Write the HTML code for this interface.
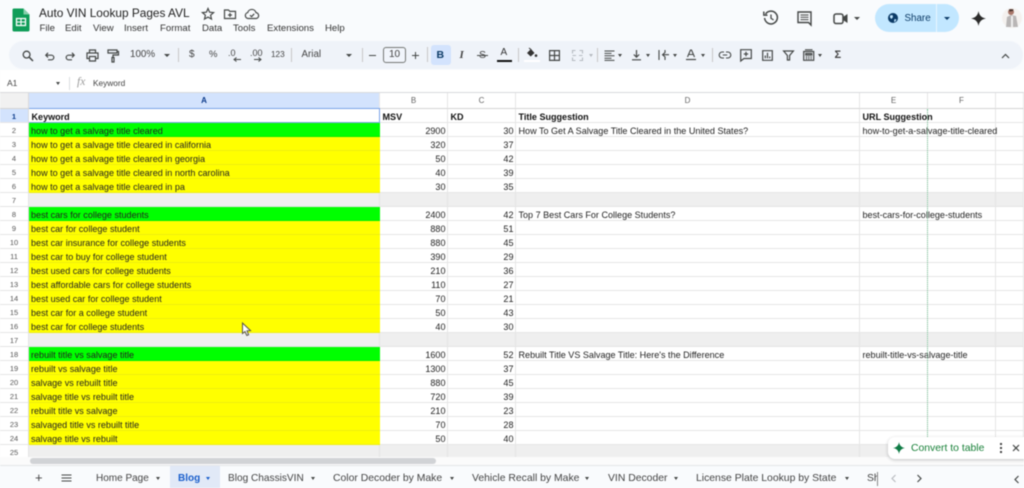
<!DOCTYPE html>
<html><head><meta charset="utf-8"><style>
*{box-sizing:border-box}
html,body{margin:0;padding:0;width:1024px;height:488px;overflow:hidden;background:#f9fbfd;font-family:"Liberation Sans",sans-serif;color:#1f1f1f}
.a{position:absolute;white-space:nowrap}
#root{position:relative;width:1024px;height:488px;overflow:hidden;filter:blur(.4px)}
table{position:absolute;left:0;top:93px;border-collapse:separate;border-spacing:0;table-layout:fixed;width:1024px;font-size:9.05px;background:#fff}
td{height:14px;padding:3px 2.5px 0;border-right:1px solid #e6e6e6;border-bottom:1px solid #e6e6e6;overflow:visible;white-space:nowrap;line-height:10px;color:#222;vertical-align:top}
td:first-child{text-align:center;font-size:7.5px;color:#555;background:#fff;border-right:1px solid #dadada;padding:3px 0 0}
tr.h td{height:16px;text-align:center;font-size:8px;color:#666;background:#fff;border-bottom:1px solid #d4d4d4}
tr.h td.s{background:#d3e3fd;color:#0b3a8a;font-weight:bold;border-bottom:1px solid #7aa3e8}
tr.h td.c{background:#f1f1f1}
tr.one td{font-weight:bold;color:#111}
tr.one td:first-child{background:#d3e3fd;color:#0b3a8a}
td.g{background:#00ff00;border-right:0;border-bottom-color:#00ee00;padding-left:2px}
td.y{background:#ffff00;border-right:0;border-bottom-color:#eeee10;padding-left:2px}
td.n{text-align:right;padding-right:1.5px}
tr.x td{background:#efefef;border-color:#e4e4e4}
tr.x td:first-child{background:#fff}
svg{position:absolute;overflow:visible}
.ic{fill:none;stroke:#444746;stroke-width:1.2}
</style></head><body><div id="root">

<!-- title bar -->
<svg style="left:12px;top:8px" width="18" height="24" viewBox="0 0 18 24"><path d="M2 0.5H11.5L17.5 6.5V22a1.5 1.5 0 0 1-1.5 1.5H2A1.5 1.5 0 0 1 .5 22V2A1.5 1.5 0 0 1 2 .5Z" fill="#0f9d58"/><path d="M11.5 .5V6.5H17.5Z" fill="#87ceac"/><rect x="4.5" y="10.5" width="9" height="7" fill="none" stroke="#fff" stroke-width="1.3"/><path d="M4.5 14H13.5M9 10.5V17.5" stroke="#fff" stroke-width="1.1"/></svg>
<div class="a" style="left:39px;top:4px;font-size:11.85px;line-height:18px;color:#1f1f1f">Auto VIN Lookup Pages AVL</div>
<svg style="left:201px;top:7px" width="14" height="14" viewBox="0 0 14 14"><path class="ic" d="M7 1.5L8.6 5.2 12.6 5.6 9.6 8.2 10.5 12.1 7 10.1 3.5 12.1 4.4 8.2 1.4 5.6 5.4 5.2Z"/></svg>
<svg style="left:223px;top:8px" width="14" height="12" viewBox="0 0 14 12"><path class="ic" d="M1.5 2H5.5L6.8 3.4H12.5V10.5H1.5Z"/><path class="ic" d="M7 5V9M5 7H9"/></svg>
<svg style="left:244px;top:8px" width="16" height="12" viewBox="0 0 16 12"><path class="ic" d="M4 10.5A3 3 0 0 1 3.7 4.6 4.3 4.3 0 0 1 12 4.6 3 3 0 0 1 12.3 10.5Z"/><path class="ic" d="M6 7.2L7.6 8.7 10.2 5.8"/></svg>
<div class="a" style="left:39.5px;top:22px;font-size:9.6px;line-height:13px;color:#333">File</div>
<div class="a" style="left:65px;top:22px;font-size:9.6px;line-height:13px;color:#333">Edit</div>
<div class="a" style="left:93px;top:22px;font-size:9.6px;line-height:13px;color:#333">View</div>
<div class="a" style="left:124px;top:22px;font-size:9.6px;line-height:13px;color:#333">Insert</div>
<div class="a" style="left:160px;top:22px;font-size:9.6px;line-height:13px;color:#333">Format</div>
<div class="a" style="left:202px;top:22px;font-size:9.6px;line-height:13px;color:#333">Data</div>
<div class="a" style="left:233px;top:22px;font-size:9.6px;line-height:13px;color:#333">Tools</div>
<div class="a" style="left:267px;top:22px;font-size:9.6px;line-height:13px;color:#333">Extensions</div>
<div class="a" style="left:325px;top:22px;font-size:9.6px;line-height:13px;color:#333">Help</div>

<!-- top right -->
<svg style="left:763px;top:10px" width="16" height="16" viewBox="0 0 16 16"><path fill="none" stroke="#444746" stroke-width="1.5" d="M2.5 4.2A6.4 6.4 0 1 1 1.6 8"/><path d="M.8 1.5V5.2H4.5" fill="none" stroke="#444746" stroke-width="1.4"/><path d="M8 4.5V8.3L10.6 10" fill="none" stroke="#444746" stroke-width="1.3"/></svg>
<svg style="left:797px;top:11px" width="15" height="15" viewBox="0 0 15 15"><path d="M1 1H14V14L11.5 11.5H1Z" fill="none" stroke="#444746" stroke-width="1.4"/><path d="M3.5 4H11.5M3.5 6.3H11.5M3.5 8.6H11.5" stroke="#444746" stroke-width="1"/></svg>
<svg style="left:833px;top:12px" width="15" height="13" viewBox="0 0 15 13"><rect x="1" y="2" width="9" height="9.5" rx="2" fill="none" stroke="#444746" stroke-width="1.5"/><path d="M10 5L14.5 2V11L10 8Z" fill="#444746"/></svg>
<div class="a" style="left:854px;top:17px;width:0;height:0;border:3px solid transparent;border-top:3.5px solid #444746;border-bottom:0"></div>
<div class="a" style="left:875px;top:4px;width:84px;height:28px;border-radius:14px;background:#c2e7ff"></div>
<div class="a" style="left:936px;top:4px;width:1px;height:28px;background:#eaf6ff"></div>
<svg style="left:887px;top:12px" width="12" height="12" viewBox="0 0 12 12"><circle cx="6" cy="6" r="5" fill="#0b3a66"/><path d="M3 3.5L5.5 3 6 5 4.5 7 3 5.5ZM7.5 7L9.5 7.5 8 10 7 9.5Z" fill="#c2e7ff"/></svg>
<div class="a" style="left:904.5px;top:10.5px;font-size:9.8px;line-height:15px;color:#0b3a66">Share</div>
<div class="a" style="left:944px;top:17px;width:0;height:0;border:3px solid transparent;border-top:3.5px solid #0b3a66;border-bottom:0"></div>
<svg style="left:971px;top:10.5px" width="15" height="15" viewBox="0 0 15 15"><path d="M7.5 0C8.3 4.5 10.5 6.7 15 7.5 10.5 8.3 8.3 10.5 7.5 15 6.7 10.5 4.5 8.3 0 7.5 4.5 6.7 6.7 4.5 7.5 0Z" fill="#2b2b2b"/></svg>
<svg style="left:1002px;top:7px" width="20" height="22" viewBox="0 0 20 22"><circle cx="10" cy="11" r="10" fill="#f4f1ef"/><circle cx="9" cy="5" r="3" fill="#a9776a"/><path d="M7 2.2L11.5 2.2 11 4 7.5 4.5Z" fill="#4b3630"/><path d="M4 20L5 10 9 8 14 9 16 20Z" fill="#b9b6b6"/><path d="M9 9L11 9 11 20 9 20Z" fill="#eee"/></svg>

<!-- toolbar -->
<div class="a" style="left:9px;top:41px;width:1014px;height:28px;border-radius:14px;background:#eff3f9"></div>
<svg style="left:22px;top:50px" width="12" height="12" viewBox="0 0 12 12"><circle cx="4.6" cy="4.6" r="3.4" fill="none" stroke="#444746" stroke-width="1.3"/><path d="M7.2 7.2L11 11" stroke="#444746" stroke-width="1.5"/></svg>
<svg style="left:45px;top:51px" width="10" height="10" viewBox="0 0 10 10"><path class="ic" d="M1 4.2H6.5A2.3 2.3 0 0 1 6.5 8.8H3M3 1.8L.8 4.2 3 6.4"/></svg>
<svg style="left:65px;top:51px" width="10" height="10" viewBox="0 0 10 10"><path class="ic" d="M9 4.2H3.5A2.3 2.3 0 0 0 3.5 8.8H7M7 1.8L9.2 4.2 7 6.4"/></svg>
<svg style="left:86px;top:49px" width="13" height="13" viewBox="0 0 13 13"><path class="ic" d="M3.5 4V1H9.5V4M3.5 9.5H1V4H12V9.5H9.5M3.5 7.5H9.5V12H3.5Z"/></svg>
<svg style="left:107px;top:49px" width="12" height="14" viewBox="0 0 12 14"><path class="ic" d="M1 1H10V4H1ZM10 2.5H11.5V6H6V8.5M5 8.5H7V13H5Z"/></svg>
<div class="a" style="left:130px;top:48px;font-size:9.8px;line-height:14px;color:#444">100%</div>
<div class="a" style="left:164px;top:54px;border:3px solid transparent;border-top:3.5px solid #444746;border-bottom:0"></div>
<div class="a" style="left:178px;top:48px;width:1px;height:14px;background:#c7c7c7"></div>
<div class="a" style="left:189px;top:48px;font-size:10px;line-height:14px;color:#444">$</div>
<div class="a" style="left:209px;top:48px;font-size:9.5px;line-height:14px;color:#444">%</div>
<div class="a" style="left:228px;top:47px;font-size:9px;line-height:12px;color:#444">.0</div>
<svg style="left:233px;top:57px" width="8" height="5" viewBox="0 0 8 5"><path d="M8 2.5H2M3.5 .5L1 2.5 3.5 4.5" fill="none" stroke="#444746"/></svg>
<div class="a" style="left:250px;top:47px;font-size:9px;line-height:12px;color:#444">.00</div>
<svg style="left:254px;top:57px" width="8" height="5" viewBox="0 0 8 5"><path d="M0 2.5H6M4.5 .5L7 2.5 4.5 4.5" fill="none" stroke="#444746"/></svg>
<div class="a" style="left:271px;top:49px;font-size:8.2px;line-height:12px;color:#444">123</div>
<div class="a" style="left:291px;top:48px;width:1px;height:14px;background:#c7c7c7"></div>
<div class="a" style="left:301.5px;top:48px;font-size:9.8px;line-height:14px;color:#444">Arial</div>
<div class="a" style="left:346px;top:54px;border:3px solid transparent;border-top:3.5px solid #444746;border-bottom:0"></div>
<div class="a" style="left:362px;top:48px;width:1px;height:14px;background:#c7c7c7"></div>
<div class="a" style="left:369px;top:54.5px;width:7px;height:1.2px;background:#444746"></div>
<div class="a" style="left:383px;top:47px;width:23px;height:16px;border:1px solid #747775;border-radius:3px;background:#f1f5fb;text-align:center;font-size:10px;line-height:14px;color:#444">10</div>
<div class="a" style="left:412px;top:54.5px;width:7px;height:1.2px;background:#444746"></div>
<div class="a" style="left:415px;top:51.5px;width:1.2px;height:7px;background:#444746"></div>
<div class="a" style="left:427px;top:47px;width:1px;height:15px;background:#c7c7c7"></div>
<div class="a" style="left:431px;top:45px;width:20px;height:20px;border-radius:3px;background:#d3e3fd"></div>
<div class="a" style="left:436.5px;top:48px;font-size:10.5px;line-height:14px;font-weight:bold;color:#0b3a66">B</div>
<div class="a" style="left:459.5px;top:48px;font-size:11px;line-height:14px;font-style:italic;font-family:'Liberation Serif',serif;font-weight:bold;color:#444">I</div>
<div class="a" style="left:479px;top:48px;font-size:10.5px;line-height:14px;color:#444">S</div>
<div class="a" style="left:477px;top:54.6px;width:11px;height:1px;background:#444746"></div>
<div class="a" style="left:500.5px;top:47px;font-size:10px;line-height:12px;color:#333">A</div>
<div class="a" style="left:496.5px;top:60px;width:15px;height:2px;background:#111"></div>
<div class="a" style="left:518px;top:48px;width:1px;height:14px;background:#c7c7c7"></div>
<svg style="left:525px;top:47px" width="13" height="12" viewBox="0 0 13 12"><path d="M2 6L6 2 9.5 6 5.7 9.5Z" fill="#333"/><path d="M4 1L6 2.5" stroke="#333"/><circle cx="11" cy="8.6" r="1.3" fill="#333"/></svg>
<div class="a" style="left:524px;top:60px;width:16px;height:2px;background:#fff"></div>
<svg style="left:549px;top:50px" width="11" height="11" viewBox="0 0 11 11"><path class="ic" d="M.6.6H10.4V10.4H.6ZM5.5.6V10.4M.6 5.5H10.4"/></svg>
<svg style="left:572px;top:50px" width="11" height="11" viewBox="0 0 11 11"><path d="M.5 3.5V.5H3.5M7.5.5H10.5V3.5M.5 7.5V10.5H3.5M7.5 10.5H10.5V7.5M.5 5.5H4M7 5.5H10.5" fill="none" stroke="#b5bac0" stroke-width="1.1"/></svg>
<div class="a" style="left:588.5px;top:54px;border:2.5px solid transparent;border-top:3px solid #b5bac0;border-bottom:0"></div>
<div class="a" style="left:597px;top:48px;width:1px;height:14px;background:#c7c7c7"></div>
<svg style="left:604px;top:50px" width="11" height="11" viewBox="0 0 11 11"><path d="M.5 1H10.5M.5 3.4H7.5M.5 5.8H10.5M.5 8.2H7.5M.5 10.4H10.5" stroke="#444746" stroke-width="1"/></svg>
<div class="a" style="left:618px;top:54px;border:2.8px solid transparent;border-top:3.2px solid #444746;border-bottom:0"></div>
<svg style="left:631px;top:49px" width="11" height="12" viewBox="0 0 11 12"><path d="M5.5 1V8M2.8 5.5L5.5 8.2 8.2 5.5M1 10.8H10" fill="none" stroke="#444746" stroke-width="1.2"/></svg>
<div class="a" style="left:646px;top:54px;border:2.8px solid transparent;border-top:3.2px solid #444746;border-bottom:0"></div>
<svg style="left:658px;top:49px" width="12" height="12" viewBox="0 0 12 12"><path d="M1 1V11M11 5.7H5M7.5 3L4.5 5.7 7.5 8.4M7 1V3M7 8.5V11" fill="none" stroke="#444746" stroke-width="1.1"/></svg>
<div class="a" style="left:673px;top:54px;border:2.8px solid transparent;border-top:3.2px solid #444746;border-bottom:0"></div>
<svg style="left:685px;top:49px" width="12" height="12" viewBox="0 0 12 12"><path d="M2.5 8L5.5 1H6.5L9.5 8M3.8 5.5H8.2" fill="none" stroke="#444746" stroke-width="1.1"/><path d="M1 10.5H11" stroke="#444746" stroke-width="1.2"/></svg>
<div class="a" style="left:701px;top:54px;border:2.8px solid transparent;border-top:3.2px solid #444746;border-bottom:0"></div>
<div class="a" style="left:712px;top:48px;width:1px;height:14px;background:#c7c7c7"></div>
<svg style="left:719px;top:51px" width="12" height="8" viewBox="0 0 12 8"><path d="M5 1H3.2A3 3 0 0 0 3.2 7H5M7 1H8.8A3 3 0 0 1 8.8 7H7M3.8 4H8.2" fill="none" stroke="#444746" stroke-width="1.1"/></svg>
<svg style="left:740px;top:49px" width="12" height="13" viewBox="0 0 12 13"><path class="ic" d="M.7.7H11.3V9.5H4L.7 12ZM6 2.8V7.3M3.8 5H8.2"/></svg>
<svg style="left:762px;top:50px" width="11" height="11" viewBox="0 0 11 11"><path class="ic" d="M.7.7H10.3V10.3H.7ZM3.3 8.2V5.5M5.5 8.2V2.8M7.7 8.2V6.5"/></svg>
<svg style="left:783px;top:50px" width="11" height="11" viewBox="0 0 11 11"><path class="ic" d="M.6 1H10.4L6.6 5.5V10H4.4V5.5Z"/></svg>
<svg style="left:803px;top:49px" width="12" height="12" viewBox="0 0 12 12"><path class="ic" d="M2 .8H9.5M.7 2.5V11.3H10.7V2.5ZM2.8 4.5H8.7V6H2.8ZM2.8 8H4.2M5.2 8H6.5M7.5 8H8.7M2.8 9.8H4.2M5.2 9.8H6.5M7.5 9.8H8.7"/></svg>
<div class="a" style="left:818px;top:54px;border:2.8px solid transparent;border-top:3.2px solid #444746;border-bottom:0"></div>
<div class="a" style="left:834.5px;top:48px;font-size:11px;line-height:14px;color:#444;font-weight:bold">Σ</div>
<svg style="left:1001px;top:53px" width="9" height="6" viewBox="0 0 9 6"><path d="M1 5L4.5 1.5 8 5" fill="none" stroke="#444746" stroke-width="1.2"/></svg>

<!-- formula bar -->
<div class="a" style="left:0;top:70px;width:1024px;height:23px;background:#fff"></div>
<div class="a" style="left:7px;top:77px;font-size:8.5px;line-height:12px;color:#444">A1</div>
<div class="a" style="left:56px;top:82px;border:2.5px solid transparent;border-top:3px solid #444746;border-bottom:0"></div>
<div class="a" style="left:69px;top:77px;width:1px;height:13px;background:#dadce0"></div>
<div class="a" style="left:77px;top:76px;font-size:11.5px;line-height:13px;font-family:'Liberation Serif',serif;font-style:italic;color:#999">fx</div>
<div class="a" style="left:93px;top:77px;font-size:8.3px;line-height:12px;color:#444">Keyword</div>
<div class="a" style="left:0;top:92px;width:1024px;height:1px;background:#d8dadc"></div>

<!-- grid -->
<table><colgroup><col style="width:29px"><col style="width:351px"><col style="width:68px"><col style="width:68px"><col style="width:344px"><col style="width:68px"><col style="width:68px"><col style="width:28px"></colgroup>
<tr class="h"><td class="c"></td><td class="s">A</td><td>B</td><td>C</td><td>D</td><td>E</td><td>F</td><td></td></tr>
<tr class="one"><td>1</td><td>Keyword</td><td>MSV</td><td>KD</td><td>Title Suggestion</td><td>URL Suggestion</td><td></td><td></td></tr>
<tr><td>2</td><td class="g">how to get a salvage title cleared</td><td class="n">2900</td><td class="n">30</td><td>How To Get A Salvage Title Cleared in the United States?</td><td>how-to-get-a-salvage-title-cleared</td><td></td><td></td></tr>
<tr><td>3</td><td class="y">how to get a salvage title cleared in california</td><td class="n">320</td><td class="n">37</td><td></td><td></td><td></td><td></td></tr>
<tr><td>4</td><td class="y">how to get a salvage title cleared in georgia</td><td class="n">50</td><td class="n">42</td><td></td><td></td><td></td><td></td></tr>
<tr><td>5</td><td class="y">how to get a salvage title cleared in north carolina</td><td class="n">40</td><td class="n">39</td><td></td><td></td><td></td><td></td></tr>
<tr><td>6</td><td class="y">how to get a salvage title cleared in pa</td><td class="n">30</td><td class="n">35</td><td></td><td></td><td></td><td></td></tr>
<tr class="x"><td>7</td><td></td><td></td><td></td><td></td><td></td><td></td><td></td></tr>
<tr><td>8</td><td class="g">best cars for college students</td><td class="n">2400</td><td class="n">42</td><td>Top 7 Best Cars For College Students?</td><td>best-cars-for-college-students</td><td></td><td></td></tr>
<tr><td>9</td><td class="y">best car for college student</td><td class="n">880</td><td class="n">51</td><td></td><td></td><td></td><td></td></tr>
<tr><td>10</td><td class="y">best car insurance for college students</td><td class="n">880</td><td class="n">45</td><td></td><td></td><td></td><td></td></tr>
<tr><td>11</td><td class="y">best car to buy for college student</td><td class="n">390</td><td class="n">29</td><td></td><td></td><td></td><td></td></tr>
<tr><td>12</td><td class="y">best used cars for college students</td><td class="n">210</td><td class="n">36</td><td></td><td></td><td></td><td></td></tr>
<tr><td>13</td><td class="y">best affordable cars for college students</td><td class="n">110</td><td class="n">27</td><td></td><td></td><td></td><td></td></tr>
<tr><td>14</td><td class="y">best used car for college student</td><td class="n">70</td><td class="n">21</td><td></td><td></td><td></td><td></td></tr>
<tr><td>15</td><td class="y">best car for a college student</td><td class="n">50</td><td class="n">43</td><td></td><td></td><td></td><td></td></tr>
<tr><td>16</td><td class="y">best car for college students</td><td class="n">40</td><td class="n">30</td><td></td><td></td><td></td><td></td></tr>
<tr class="x"><td>17</td><td></td><td></td><td></td><td></td><td></td><td></td><td></td></tr>
<tr><td>18</td><td class="g">rebuilt title vs salvage title</td><td class="n">1600</td><td class="n">52</td><td>Rebuilt Title VS Salvage Title: Here's the Difference</td><td>rebuilt-title-vs-salvage-title</td><td></td><td></td></tr>
<tr><td>19</td><td class="y">rebuilt vs salvage title</td><td class="n">1300</td><td class="n">37</td><td></td><td></td><td></td><td></td></tr>
<tr><td>20</td><td class="y">salvage vs rebuilt title</td><td class="n">880</td><td class="n">45</td><td></td><td></td><td></td><td></td></tr>
<tr><td>21</td><td class="y">salvage title vs rebuilt title</td><td class="n">720</td><td class="n">39</td><td></td><td></td><td></td><td></td></tr>
<tr><td>22</td><td class="y">rebuilt title vs salvage</td><td class="n">210</td><td class="n">23</td><td></td><td></td><td></td><td></td></tr>
<tr><td>23</td><td class="y">salvaged title vs rebuilt title</td><td class="n">70</td><td class="n">28</td><td></td><td></td><td></td><td></td></tr>
<tr><td>24</td><td class="y">salvage title vs rebuilt</td><td class="n">50</td><td class="n">40</td><td></td><td></td><td></td><td></td></tr>
<tr class="x"><td>25</td><td></td><td></td><td></td><td></td><td></td><td></td><td></td></tr>
</table>

<!-- selection A1 -->
<div class="a" style="left:29px;top:108px;width:351px;height:15px;border:1px solid #7aa3e8;border-left:0"></div>
<!-- green dashed line -->
<div class="a" style="left:927px;top:109px;width:0;height:348px;border-left:1px dotted #7cc99b"></div>

<!-- cursor -->
<svg style="left:241px;top:322px" width="12" height="15" viewBox="0 0 12 15"><path d="M1.5 1V11.5L4 9.5 5.8 13.5 7.6 12.7 6 8.8 9.5 8.6Z" fill="#fff" stroke="#55524a" stroke-width="1"/></svg>

<!-- scroll bar -->
<div class="a" style="left:0;top:457px;width:1024px;height:9px;background:#fbfbfb"></div>
<div class="a" style="left:30px;top:458px;width:406px;height:6px;border-radius:3px;background:#d1d3d6"></div>

<!-- tabs -->
<div class="a" style="left:0;top:465px;width:1024px;height:23px;background:#f9fbfd;border-top:1px solid #e4e6e8"></div>
<div class="a" style="left:170px;top:466px;width:50px;height:22px;background:#e1e9f7"></div>
<div class="a" style="left:35px;top:471px;font-size:13px;line-height:14px;color:#444">+</div>
<svg style="left:61px;top:474px" width="11" height="8" viewBox="0 0 11 8"><path d="M.5 1H10.5M.5 4H10.5M.5 7H10.5" stroke="#444746" stroke-width="1.1"/></svg>
<div class="a" style="left:96px;top:471.5px;font-size:10px;line-height:14px;color:#444">Home Page</div>
<div class="a" style="left:156px;top:477px;border:2.6px solid transparent;border-top:3px solid #444746;border-bottom:0"></div>
<div class="a" style="left:178px;top:471.5px;font-size:10px;line-height:14px;color:#1a5fcc;font-weight:bold">Blog</div>
<div class="a" style="left:206px;top:477px;border:2.6px solid transparent;border-top:3px solid #1a5fcc;border-bottom:0"></div>
<div class="a" style="left:228px;top:471.5px;font-size:10.1px;line-height:14px;color:#444">Blog ChassisVIN</div>
<div class="a" style="left:311px;top:477px;border:2.6px solid transparent;border-top:3px solid #444746;border-bottom:0"></div>
<div class="a" style="left:333px;top:471.5px;font-size:10.4px;line-height:14px;color:#444">Color Decoder by Make</div>
<div class="a" style="left:450px;top:477px;border:2.6px solid transparent;border-top:3px solid #444746;border-bottom:0"></div>
<div class="a" style="left:472px;top:471.5px;font-size:10.4px;line-height:14px;color:#444">Vehicle Recall by Make</div>
<div class="a" style="left:585px;top:477px;border:2.6px solid transparent;border-top:3px solid #444746;border-bottom:0"></div>
<div class="a" style="left:608px;top:471.5px;font-size:10.4px;line-height:14px;color:#444">VIN Decoder</div>
<div class="a" style="left:674px;top:477px;border:2.6px solid transparent;border-top:3px solid #444746;border-bottom:0"></div>
<div class="a" style="left:696px;top:471.5px;font-size:10.4px;line-height:14px;color:#444">License Plate Lookup by State</div>
<div class="a" style="left:845px;top:477px;border:2.6px solid transparent;border-top:3px solid #444746;border-bottom:0"></div>
<div class="a" style="left:867px;top:471.5px;width:11px;overflow:hidden;font-size:10.4px;line-height:14px;color:#444;border-right:1px solid #888">Sheet</div>
<svg style="left:890px;top:474px" width="7" height="9" viewBox="0 0 7 9"><path d="M5.5 1L2 4.5 5.5 8" fill="none" stroke="#b9bcc0" stroke-width="1.2"/></svg>
<svg style="left:916px;top:474px" width="7" height="9" viewBox="0 0 7 9"><path d="M1.5 1L5 4.5 1.5 8" fill="none" stroke="#444746" stroke-width="1.2"/></svg>
<svg style="left:1013px;top:475px" width="7" height="9" viewBox="0 0 7 9"><path d="M5.5 1L2 4.5 5.5 8" fill="none" stroke="#444746" stroke-width="1.2"/></svg>

<!-- convert to table -->
<div class="a" style="left:888px;top:437px;width:140px;height:22px;border-radius:7px 0 0 7px;background:#fff;box-shadow:0 1px 3px rgba(60,64,67,.3)"></div>
<svg style="left:893px;top:442px" width="12" height="12" viewBox="0 0 12 12"><path d="M6 0C6.5 3.5 8.5 5.5 12 6 8.5 6.5 6.5 8.5 6 12 5.5 8.5 3.5 6.5 0 6 3.5 5.5 5.5 3.5 6 0Z" fill="#0f7b45"/></svg>
<div class="a" style="left:911px;top:441.5px;font-size:10.4px;line-height:14px;color:#188038">Convert to table</div>
<div class="a" style="left:999.5px;top:443px;width:2px;height:2px;background:#444;box-shadow:0 4px 0 #444,0 8px 0 #444"></div>
<svg style="left:1012px;top:444px" width="8" height="8" viewBox="0 0 8 8"><path d="M1 1L7 7M7 1L1 7" stroke="#444746" stroke-width="1.2"/></svg>

</div></body></html>
